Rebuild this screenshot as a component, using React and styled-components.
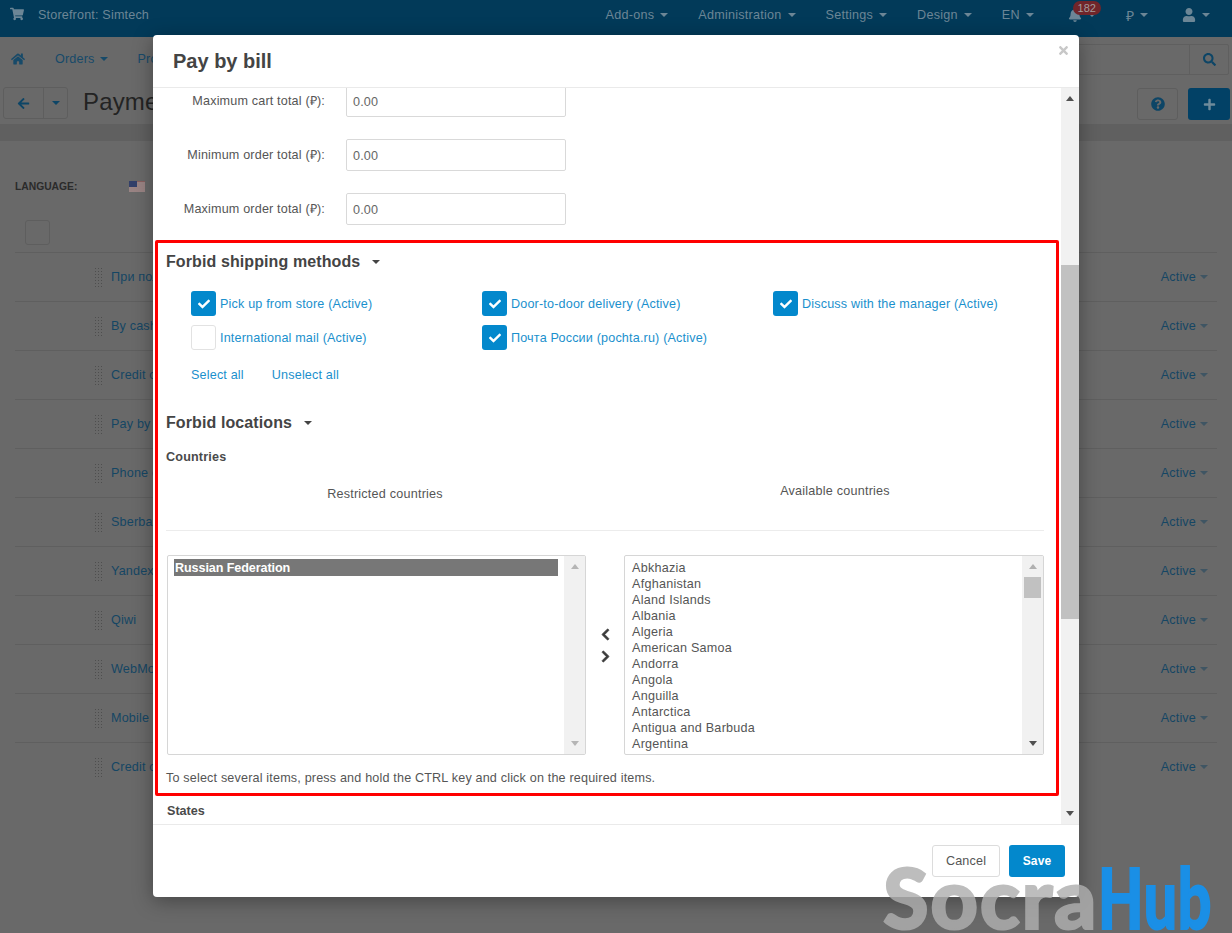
import React from "react";
import styled, { createGlobalStyle } from "styled-components";
import {
  FaShoppingCart, FaHome, FaBell, FaUser, FaArrowLeft, FaQuestionCircle,
  FaPlus, FaSearch, FaCheck, FaChevronLeft, FaChevronRight, FaTimes,
} from "react-icons/fa";

const Global = createGlobalStyle`
  html, body { margin: 0; padding: 0; }
  body { width: 1232px; height: 933px; overflow: hidden; background: #696969; font-family: "Liberation Sans", Arial, sans-serif; }
  * { box-sizing: border-box; }
`;

const Page = styled.div`position: relative; width: 1232px; height: 933px; overflow: hidden; background: #696969; letter-spacing: .17px;`;

const TopBar = styled.header`
  height: 37px; background: #023a59; display: flex; align-items: center;
  justify-content: space-between; padding: 0 22px 7px 10px; color: #6c8696; font-size: 12.6px;
`;
const Brand = styled.div`display: flex; align-items: center; gap: 14px; svg { font-size: 14px; margin-top: -3px; }`;
const TopMenu = styled.nav`display: flex; align-items: center; gap: 30px; letter-spacing: .25px;`;
const TopItem = styled.span`
  position: relative; display: inline-flex; align-items: center; gap: 6px; margin-left: ${p => p.$shift || 0}px;
  svg { font-size: 14px; }
`;
const Caret = styled.i`
  display: inline-block; width: 0; height: 0; flex: none;
  border-left: ${p => p.$size || 4}px solid transparent; border-right: ${p => p.$size || 4}px solid transparent;
  border-top: ${p => p.$size || 4}px solid ${p => p.$color || "currentColor"};
`;
const Badge = styled.b`
  position: absolute; left: 5px; top: -7px; width: 28px; height: 14px; border-radius: 8px;
  background: #70252a; color: #a39a9b; font-size: 11px; font-weight: 400; text-align: center; line-height: 14px; letter-spacing: 0;
`;
const Ruble = styled.span`font-size: 14px;`;

const NavBar = styled.nav`
  height: 44px; display: flex; align-items: center; padding: 0 3px 0 11px; color: #174a69; font-size: 12.6px;
`;
const NavItem = styled.span`display: inline-flex; align-items: center; gap: 5px; margin-right: 30px; svg { font-size: 14px; }`;
const Search = styled.div`
  margin-left: auto; width: 200px; height: 31px; border: 1px solid #5f5f5f; border-radius: 2px;
  display: flex; justify-content: flex-end;
`;
const SearchBtn = styled.span`width: 39px; border-left: 1px solid #5f5f5f; display: flex; align-items: center; justify-content: center; color: #0d4566; font-size: 13px;`;

const Toolbar = styled.div`
  height: 44px; display: flex; align-items: flex-start; padding: 6px 2px 0 3px; border-bottom: 1px solid #606060;
`;
const BackGroup = styled.div`display: flex; height: 32px; border: 1px solid #5e5e5e; border-radius: 3px; color: #0d4566;`;
const BackBtn = styled.span`
  width: ${p => p.$w}px; display: flex; align-items: center; justify-content: center; font-size: 13px;
  & + & { border-left: 1px solid #5e5e5e; }
`;
const PageTitle = styled.h1`margin: 0 0 0 15px; font-size: 24px; line-height: 30px; font-weight: 400; color: #232323; white-space: nowrap;`;
const ToolRight = styled.div`margin-left: auto; display: flex; gap: 10px; padding-top: 1px;`;
const HelpBtn = styled.span`
  width: 41px; height: 32px; border: 1px solid #5e5e5e; border-radius: 3px; color: #0d4566;
  display: flex; align-items: center; justify-content: center; font-size: 14px;
`;
const AddBtn = styled.span`
  width: 42px; height: 32px; border-radius: 3px; background: #024166; color: #6f8b9b;
  display: flex; align-items: center; justify-content: center; font-size: 13px;
`;
const Strip = styled.div`height: 16px; background: #606060;`;

const Main = styled.main`padding: 39px 15px 0;`;
const LangRow = styled.div`display: flex; align-items: center; height: 12px; font-size: 10.3px; font-weight: 700; color: #2b2b2b; letter-spacing: 0;`;
const LangLabel = styled.span`width: 114px;`;
const HeadCheck = styled.span`display: block; width: 25px; height: 25px; margin: 28px 0 7px 10px; border: 1px solid #5e5e5e; border-radius: 3px;`;
const Row = styled.div`
  height: 49px; border-top: 1px solid #5f5f5f; display: flex; align-items: center; padding: 0 9px 0 79px;
  font-size: 12.6px; color: #154664; width: 1202px;
`;
const Dots = styled.span`
  width: 9px; height: 20px; margin-right: 8px;
  background-image: radial-gradient(circle, #4e4e4e 0.7px, transparent 1px); background-size: 3px 3px;
`;
const RowStatus = styled.span`margin-left: auto; display: inline-flex; align-items: center; gap: 4px;`;

const Modal = styled.section`
  position: absolute; left: 153px; top: 35px; width: 926px; height: 862px; background: #fff; border-radius: 4px;
  box-shadow: 0 4px 20px rgba(0,0,0,.35); display: flex; flex-direction: column; overflow: hidden;
`;
const ModalHead = styled.div`
  position: relative; flex: none; height: 53px; border-bottom: 1px solid #eaeaea; padding: 14px 20px 0;
  color: #444; font-size: 20px; font-weight: 700; line-height: 24px; letter-spacing: 0;
`;
const Close = styled.span`position: absolute; right: 9px; top: 9px; color: #c8c8c8; font-size: 13px; line-height: 13px;`;
const ModalBody = styled.div`flex: none; height: 737px; display: flex; border-bottom: 1px solid #eaeaea;`;
const Content = styled.div`flex: 1; min-width: 0; overflow: hidden;`;
const Inner = styled.div`margin-top: -3px;`;
const Fields = styled.div`display: flex; flex-direction: column; gap: 22px; margin-bottom: 15px;`;
const Field = styled.div`display: flex; align-items: center; gap: 21px; height: 32px;`;
const FieldLabel = styled.label`width: 172px; padding-bottom: 2px; text-align: right; font-size: 12.6px; color: #555;`;
const Input = styled.div`
  width: 220px; height: 32px; border: 1px solid #d9d9d9; border-radius: 2px; padding: 0 6px;
  font-size: 12.6px; line-height: 32px; color: #666;
`;

const Frame = styled.div`margin: 0 2px; height: 556px; border: 3px solid #f00; border-radius: 2px; padding: 9px 8px 0;`;
const Heading = styled.h3`
  margin: ${p => p.$top || 0}px 0 0; display: flex; align-items: center; gap: 12px; height: 20px;
  font-size: 16px; font-weight: 700; color: #444; letter-spacing: .1px;
`;
const Methods = styled.div`display: grid; grid-template-columns: repeat(3, 291px); row-gap: 9px; margin: 19px 0 0 25px;`;
const Method = styled.label`display: flex; align-items: center; gap: 4px; height: 25px; font-size: 12.6px; color: #1a90cd;`;
const Box = styled.span`
  width: 25px; height: 25px; border-radius: 3px; display: flex; align-items: center; justify-content: center;
  color: #fff; font-size: 12px; background: ${p => p.$on ? "#0388cc" : "#fff"};
  border: ${p => p.$on ? "none" : "1px solid #e2e2e2"};
`;
const Links = styled.div`display: flex; gap: 28px; margin: 17px 0 0 25px; font-size: 12.6px; line-height: 16px; color: #1a90cd;`;
const SubHead = styled.div`margin-top: 16px; font-size: 12.6px; line-height: 16px; font-weight: 700; color: #4a4a4a;`;
const Columns = styled.div`
  display: grid; grid-template-columns: 438px 1fr; width: 878px; height: 66px; border-bottom: 1px solid #ececec; margin-bottom: 24px;
`;
const ColumnTitle = styled.div`padding: ${p => p.$top}px 0 0 ${p => p.$left || 0}px; text-align: center; font-size: 12.6px; line-height: 16px; color: #555; letter-spacing: .22px;`;
const Transfer = styled.div`display: grid; grid-template-columns: 419px 38px 420px; margin-left: 1px; height: 200px;`;
const ListBox = styled.div`display: flex; border: 1px solid #d6d6d6; border-radius: 2px; overflow: hidden;`;
const Options = styled.div`flex: 1; min-width: 0; padding: 3px 0 0 ${p => p.$pad}px; font-size: 12.6px; line-height: 18px; color: #555; letter-spacing: .25px;`;
const Option = styled.div`
  height: ${p => p.$on ? 17 : 16}px; padding-left: ${p => p.$on ? 1 : 0}px; margin-right: ${p => p.$on ? 6 : 0}px;
  background: ${p => p.$on ? "#777" : "none"}; color: ${p => p.$on ? "#fff" : "inherit"}; font-weight: ${p => p.$on ? 700 : 400};
  letter-spacing: ${p => p.$on ? "-.1px" : "inherit"};
`;
const ScrollTrack = styled.div`
  flex: none; width: ${p => p.$w}px; background: #f1f1f1; display: flex; flex-direction: column; align-items: center;
`;
const Arrow = styled.i`
  display: block; width: 0; height: 0; flex: none; margin: ${p => p.$m};
  border-left: 4px solid transparent; border-right: 4px solid transparent;
  ${p => p.$up ? `border-bottom: 5px solid ${p.$c};` : `border-top: 5px solid ${p.$c};`}
`;
const Thumb = styled.div`flex: none; align-self: stretch; margin: ${p => p.$m}; height: ${p => p.$h}px; background: #c1c1c1;`;
const Spacer = styled.div`flex: 1;`;
const Movers = styled.div`
  display: flex; flex-direction: column; align-items: center; justify-content: center; gap: 9px; padding-bottom: 19px;
  color: #3b3b3b; font-size: 13px; svg { stroke: currentColor; stroke-width: 30px; }
`;
const Note = styled.div`margin-top: 15px; font-size: 12.6px; line-height: 16px; color: #555;`;
const States = styled.div`padding: 7px 0 0 14px; font-size: 12.6px; line-height: 16px; font-weight: 700; color: #4a4a4a; letter-spacing: 0;`;
const ModalFoot = styled.div`flex: 1; display: flex; justify-content: flex-end; align-items: flex-start; gap: 9px; padding: 20px 14px 0 0;`;
const Btn = styled.span`
  height: 32px; width: ${p => p.$w}px; border-radius: 3px; display: flex; align-items: center; justify-content: center;
  font-size: ${p => p.$primary ? 12 : 12.6}px; font-weight: ${p => p.$primary ? 700 : 400}; background: ${p => p.$primary ? "#0388cc" : "#fff"};
  color: ${p => p.$primary ? "#fff" : "#555"}; border: ${p => p.$primary ? "none" : "1px solid #dcdcdc"};
`;

const Watermark = styled.div`
  position: absolute; left: 883px; top: 861px; font-family: "Lato", sans-serif; font-size: 83px; font-weight: 900;
  line-height: 72px; white-space: nowrap; pointer-events: none; -webkit-text-stroke: 2px currentColor;
`;
const Socra = styled.span`color: #afafaf; opacity: .82; letter-spacing: 1.6px;`;
const Hub = styled.span`
  display: inline-block; color: #1a8fe6; letter-spacing: 1px; transform: scaleX(.71); transform-origin: left center;
`;

const menu = ["Add-ons", "Administration", "Settings", "Design", "EN"];
const rows = ["При получении", "By cash", "Credit card", "Pay by bill", "Phone ordering", "Sberbank", "Yandex", "Qiwi", "WebMoney", "Mobile", "Credit card"];
const methods = [
  ["Pick up from store (Active)", true], ["Door-to-door delivery (Active)", true], ["Discuss with the manager (Active)", true],
  ["International mail (Active)", false], ["Почта России (pochta.ru) (Active)", true],
];
const countries = ["Abkhazia", "Afghanistan", "Aland Islands", "Albania", "Algeria", "American Samoa", "Andorra", "Angola", "Anguilla", "Antarctica", "Antigua and Barbuda", "Argentina"];

const Flag = () => (
  <svg width="16" height="11" viewBox="0 0 16 11">
    <rect width="16" height="11" fill="#8a5f5f" />
    <path d="M0 2h16M0 4h16M0 6h16M0 8h16M0 10h16" stroke="#a9a9a9" strokeWidth="1" />
    <rect width="8" height="6" fill="#33406a" />
  </svg>
);

export default function App() {
  return (
    <Page>
      <Global />
      <TopBar>
        <Brand><FaShoppingCart /><span>Storefront: Simtech</span></Brand>
        <TopMenu>
          {menu.map(m => <TopItem key={m}>{m}<Caret /></TopItem>)}
          <TopItem $shift={4}><FaBell /><Badge>182</Badge><Caret /></TopItem>
          <TopItem><Ruble>₽</Ruble><Caret /></TopItem>
          <TopItem $shift={4}><FaUser /><Caret /></TopItem>
        </TopMenu>
      </TopBar>
      <NavBar>
        <NavItem><FaHome /></NavItem>
        <NavItem>Orders<Caret /></NavItem>
        <NavItem>Products<Caret /></NavItem>
        <Search><SearchBtn><FaSearch /></SearchBtn></Search>
      </NavBar>
      <Toolbar>
        <BackGroup>
          <BackBtn $w={39}><FaArrowLeft /></BackBtn>
          <BackBtn $w={24}><Caret /></BackBtn>
        </BackGroup>
        <PageTitle>Payment methods</PageTitle>
        <ToolRight>
          <HelpBtn><FaQuestionCircle /></HelpBtn>
          <AddBtn><FaPlus /></AddBtn>
        </ToolRight>
      </Toolbar>
      <Strip />
      <Main>
        <LangRow><LangLabel>LANGUAGE:</LangLabel><Flag /></LangRow>
        <HeadCheck />
        {rows.map((r, i) => (
          <Row key={i}><Dots /><span>{r}</span><RowStatus>Active<Caret $color="#3f5563" /></RowStatus></Row>
        ))}
      </Main>

      <Modal>
        <ModalHead>Pay by bill<Close><FaTimes /></Close></ModalHead>
        <ModalBody>
          <Content>
            <Inner>
              <Fields>
                <Field><FieldLabel>Maximum cart total (₽):</FieldLabel><Input>0.00</Input></Field>
                <Field><FieldLabel>Minimum order total (₽):</FieldLabel><Input>0.00</Input></Field>
                <Field><FieldLabel>Maximum order total (₽):</FieldLabel><Input>0.00</Input></Field>
              </Fields>
              <Frame>
                <Heading>Forbid shipping methods<Caret $color="#444" /></Heading>
                <Methods>
                  {methods.map(([t, on]) => (
                    <Method key={t}><Box $on={on}>{on && <FaCheck />}</Box>{t}</Method>
                  ))}
                </Methods>
                <Links><span>Select all</span><span>Unselect all</span></Links>
                <Heading $top={30}>Forbid locations<Caret $color="#444" /></Heading>
                <SubHead>Countries</SubHead>
                <Columns>
                  <ColumnTitle $top={21}>Restricted countries</ColumnTitle>
                  <ColumnTitle $top={18} $left={22}>Available countries</ColumnTitle>
                </Columns>
                <Transfer>
                  <ListBox>
                    <Options $pad={6}><Option $on>Russian Federation</Option></Options>
                    <ScrollTrack $w={21}>
                      <Arrow $up $c="#b5b5b5" $m="8px 0 0" />
                      <Spacer />
                      <Arrow $c="#b5b5b5" $m="0 0 8px" />
                    </ScrollTrack>
                  </ListBox>
                  <Movers><FaChevronLeft /><FaChevronRight /></Movers>
                  <ListBox>
                    <Options $pad={7}>
                      {countries.map(c => <Option key={c}>{c}</Option>)}
                    </Options>
                    <ScrollTrack $w={21}>
                      <Arrow $up $c="#b0b0b0" $m="8px 0 0" />
                      <Thumb $h={21} $m="8px 2px 0" />
                      <Spacer />
                      <Arrow $c="#505050" $m="0 0 8px" />
                    </ScrollTrack>
                  </ListBox>
                </Transfer>
                <Note>To select several items, press and hold the CTRL key and click on the required items.</Note>
              </Frame>
              <States>States</States>
            </Inner>
          </Content>
          <ScrollTrack $w={18}>
            <Arrow $up $c="#505050" $m="8px 0 0" />
            <Thumb $h={354} $m="164px 0 0" />
            <Spacer />
            <Arrow $c="#505050" $m="0 0 8px" />
          </ScrollTrack>
        </ModalBody>
        <ModalFoot>
          <Btn $w={68}>Cancel</Btn>
          <Btn $w={56} $primary>Save</Btn>
        </ModalFoot>
      </Modal>
      <Watermark><Socra>Socra</Socra><Hub>Hub</Hub></Watermark>
    </Page>
  );
}
